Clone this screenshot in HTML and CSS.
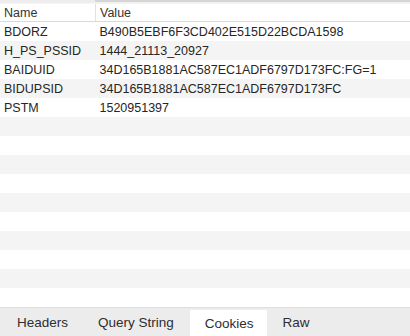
FILE: index.html
```html
<!DOCTYPE html>
<html lang="en">
<head>
    <meta charset="UTF-8">
    <title>Cookies</title>
    <link rel="stylesheet" href="styles.css">
</head>
<body>
    <div class="panel">
        <div class="top-strip">
            <div class="strip-left"></div>
            <div class="strip-right"></div>
        </div>
        <table class="table">
            <thead>
                <tr>
                    <th class="col-name">Name</th>
                    <th>Value</th>
                </tr>
            </thead>
            <tbody>
                <tr><td>BDORZ</td><td>B490B5EBF6F3CD402E515D22BCDA1598</td></tr>
                <tr><td>H_PS_PSSID</td><td>1444_21113_20927</td></tr>
                <tr><td>BAIDUID</td><td>34D165B1881AC587EC1ADF6797D173FC:FG=1</td></tr>
                <tr><td>BIDUPSID</td><td>34D165B1881AC587EC1ADF6797D173FC</td></tr>
                <tr><td>PSTM</td><td>1520951397</td></tr>
                <tr><td></td><td></td></tr>
                <tr><td></td><td></td></tr>
                <tr><td></td><td></td></tr>
                <tr><td></td><td></td></tr>
                <tr><td></td><td></td></tr>
                <tr><td></td><td></td></tr>
                <tr><td></td><td></td></tr>
                <tr><td></td><td></td></tr>
                <tr><td></td><td></td></tr>
                <tr><td></td><td></td></tr>
            </tbody>
        </table>
        <div class="tabs">
            <span class="tab">Headers</span>
            <span class="tab">Query String</span>
            <span class="tab active">Cookies</span>
            <span class="tab">Raw</span>
        </div>
    </div>
</body>
</html>
```

FILE: styles.css
```css
body {
    margin: 0;
    padding: 0;
    background: #fff;
    font-family: "Liberation Sans", Arial, sans-serif;
    color: #262626;
}
.panel {
    width: 410px;
    height: 336px;
    display: flex;
    flex-direction: column;
    overflow: hidden;
}
.top-strip {
    display: flex;
    height: 4px;
    flex-shrink: 0;
}
.strip-left {
    width: 95px;
    background: #eeeeee;
    border-bottom: 1px solid #f6f6f6;
}
.strip-right {
    flex: 1;
    background: #f2f2f2;
    border-top: 2px solid #d6d6d6;
}
.table {
    width: 100%;
    border-collapse: collapse;
    table-layout: fixed;
    font-size: 12.5px;
    flex-shrink: 0;
}
.table th {
    height: 16px;
    padding: 1px 4px 0;
    text-align: left;
    font-weight: normal;
    color: #333;
    background: #fff;
    border-bottom: 1px solid #d9d9d9;
    line-height: 16px;
}
.table th.col-name {
    width: 87px;
    border-right: 1px solid #e2e2e2;
}
.table td {
    height: 18px;
    padding: 1px 4px 0;
    line-height: 18px;
    white-space: nowrap;
    overflow: hidden;
}
.table tbody tr:nth-child(even) {
    background: #f4f4f4;
}
.tabs {
    flex: 1;
    display: flex;
    align-items: stretch;
    padding-left: 3px;
    gap: 2px;
    background: #ececec;
    border-top: 1px solid #dedede;
    font-size: 13.5px;
    color: #2e2e2e;
}
.tab {
    display: flex;
    align-items: center;
    padding: 1px 14px 0;
}
.tab.active {
    background: #fff;
    margin-top: 2px;
    padding: 0 13px 0 15px;
}
```
